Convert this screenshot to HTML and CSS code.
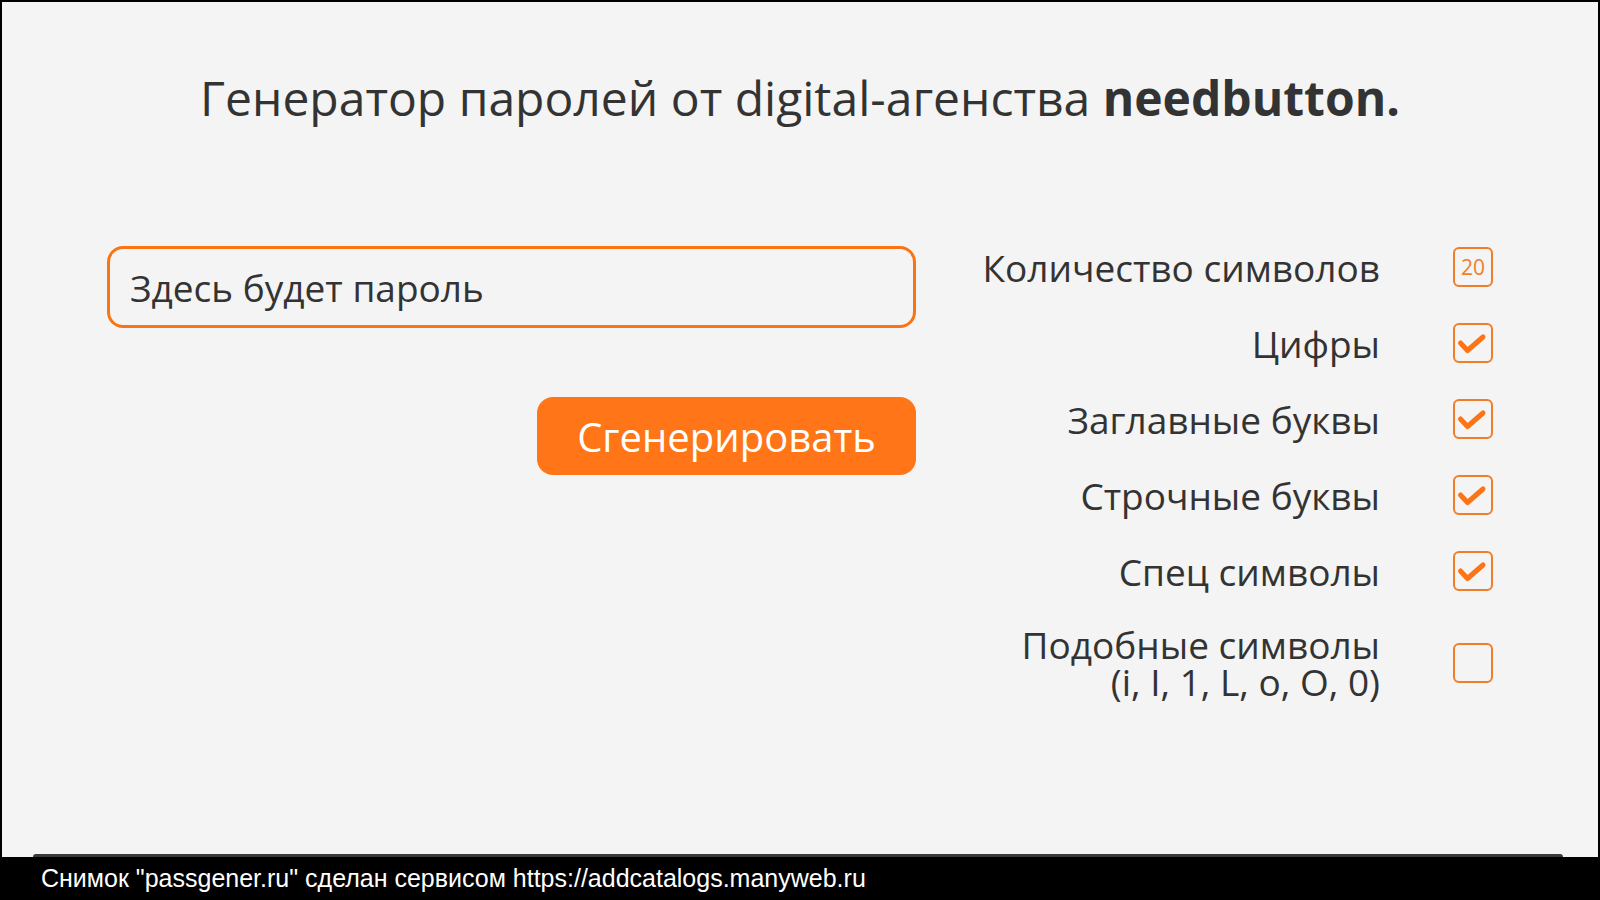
FILE: index.html
```html
<!DOCTYPE html>
<html lang="ru">
<head>
    <meta charset="UTF-8">
    <meta name="viewport" content="width=device-width, initial-scale=1.0">
    <title>Генератор паролей</title>

    <link rel="stylesheet" href="styles.css">
</head>
<body>

    <div class="page">
        <h1 class="title">Генератор паролей от digital-агенства <b>needbutton.</b></h1>

        <div class="generator">
            <div class="generator-left">
                <input type="text" class="password-field" placeholder="Здесь будет пароль" readonly>
                <button type="button" class="generate-btn">Сгенерировать</button>
            </div>

            <div class="options">
                <div class="option">
                    <span class="option-label">Количество символов</span>
                    <span class="option-box option-count">20</span>
                </div>
                <div class="option">
                    <span class="option-label">Цифры</span>
                    <span class="option-box">
                        <svg class="check" viewBox="0 0 36 36"><polyline points="5.5,18 12.5,25.5 28,12"/></svg>
                    </span>
                </div>
                <div class="option">
                    <span class="option-label">Заглавные буквы</span>
                    <span class="option-box">
                        <svg class="check" viewBox="0 0 36 36"><polyline points="5.5,18 12.5,25.5 28,12"/></svg>
                    </span>
                </div>
                <div class="option">
                    <span class="option-label">Строчные буквы</span>
                    <span class="option-box">
                        <svg class="check" viewBox="0 0 36 36"><polyline points="5.5,18 12.5,25.5 28,12"/></svg>
                    </span>
                </div>
                <div class="option">
                    <span class="option-label">Спец символы</span>
                    <span class="option-box">
                        <svg class="check" viewBox="0 0 36 36"><polyline points="5.5,18 12.5,25.5 28,12"/></svg>
                    </span>
                </div>
                <div class="option option-tall">
                    <span class="option-label">
                        <span class="label-line">Подобные символы</span>
                        <span class="label-line">(i, I, 1, L, o, O, 0)</span>
                    </span>
                    <span class="option-box"></span>
                </div>
            </div>
        </div>

        <div class="footer-bar"></div>
        <div class="caption">Снимок "passgener.ru" сделан сервисом https://addcatalogs.manyweb.ru</div>
    </div>

</body>
</html>
```

FILE: styles.css
```css
/* General body styling */
body {
    margin: 0;
    font-family: "Open Sans", "Noto Sans", sans-serif;
    color: #333;
    background-color: #000;
}

.page {
    height: 900px;
    box-sizing: border-box;
    border: 2px solid #000;
    border-bottom: none;
    background-color: #f4f4f4;
    display: flex;
    flex-direction: column;
}

.title {
    margin: 64px 0 0;
    font-size: 48px;
    font-weight: 400;
    line-height: 64px;
    text-align: center;
    color: #333;
}

.title b {
    font-weight: 700;
}

.generator {
    flex: 1;
    display: flex;
    align-items: flex-start;
    padding: 0 105px;
    margin-top: 115px;
}

.generator-left {
    width: 809px;
    display: flex;
    flex-direction: column;
    align-items: flex-end;
}

.password-field {
    width: 100%;
    height: 82px;
    box-sizing: border-box;
    margin-top: 1px;
    padding: 0 20px;
    border: 3px solid #fa7414;
    border-radius: 16px;
    background: #f4f4f4;
    font-family: inherit;
    font-size: 37px;
    color: #333;
    outline: none;
}

.password-field::placeholder {
    color: #333;
    opacity: 1;
}

.generate-btn {
    margin-top: 69px;
    width: 379px;
    height: 78px;
    border: none;
    border-radius: 16px;
    background-color: #ff7517;
    color: #fff;
    font-family: inherit;
    font-size: 40px;
    cursor: pointer;
}

.options {
    margin-left: auto;
    display: flex;
    flex-direction: column;
    gap: 32px;
}

.option {
    display: flex;
    align-items: center;
    justify-content: flex-end;
    gap: 73px;
    min-height: 44px;
}

.option-tall {
    margin-top: 1px;
}

.option-label {
    font-size: 37px;
    line-height: 37px;
    text-align: right;
}

.label-line {
    display: block;
    height: 37px;
}

.option-box {
    flex: 0 0 auto;
    width: 40px;
    height: 40px;
    box-sizing: border-box;
    border: 2px solid #f07d2a;
    border-radius: 6px;
}

.option-count {
    display: flex;
    align-items: center;
    justify-content: center;
    font-size: 21px;
    color: #f07d2a;
}

.check {
    display: block;
    width: 36px;
    height: 36px;
    fill: none;
    stroke: #fb7418;
    stroke-width: 5;
    stroke-linecap: round;
    stroke-linejoin: round;
}

.footer-bar {
    height: 3px;
    margin: 0 35px 0 31px;
    background-color: #3a3a3a;
    border-radius: 20px 20px 0 0;
}

.caption {
    height: 43px;
    margin: 0 -2px;
    padding-left: 41px;
    background-color: #000;
    color: #fff;
    font-family: "Liberation Sans", Arial, sans-serif;
    font-size: 25px;
    line-height: 42px;
}
```
